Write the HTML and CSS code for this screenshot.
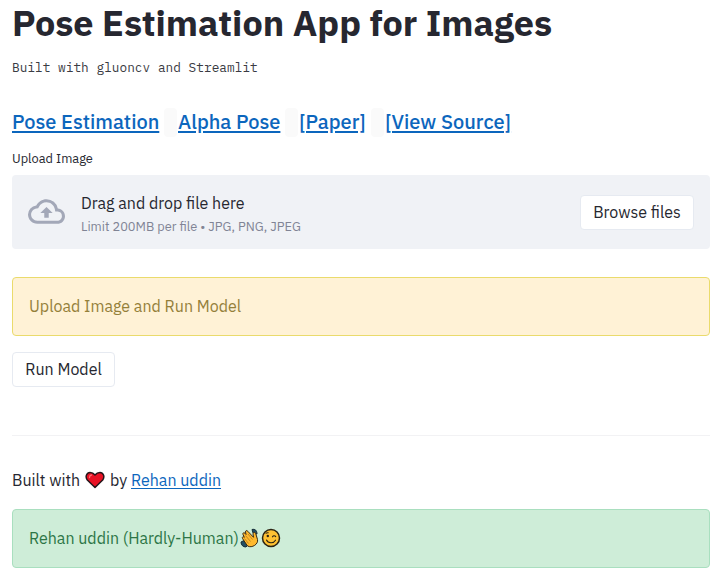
FILE: index.html
```
<!DOCTYPE html>
<html lang="en">
<head>
<meta charset="utf-8">
<title>Pose Estimation App for Images</title>
<link rel="stylesheet" href="styles.css">
</head>
<body>
<main class="page">
  <h1 class="title">Pose Estimation App for Images</h1>
  <p class="mono">Built with gluoncv and Streamlit</p>
  <nav class="links">
    <a class="l1" href="#">Pose Estimation</a><i class="chip"></i>
    <a class="l2" href="#">Alpha Pose</a><i class="chip"></i>
    <a class="l3" href="#">[Paper]</a><i class="chip"></i>
    <a class="l4" href="#">[View Source]</a>
  </nav>
  <label class="label">Upload Image</label>
  <section class="dropzone">
    <svg class="cloud" viewBox="0 0 24 24"><path d="M19.35 10.04A7.49 7.49 0 0 0 12 4C9.11 4 6.6 5.64 5.35 8.04A5.994 5.994 0 0 0 0 14c0 3.31 2.69 6 6 6h13c2.76 0 5-2.24 5-5 0-2.64-2.05-4.78-4.65-4.96zM19 18H6c-2.21 0-4-1.79-4-4 0-2.05 1.53-3.76 3.56-3.97l1.07-.11.5-.95A5.469 5.469 0 0 1 12 6c2.62 0 4.88 1.86 5.39 4.43l.3 1.5 1.53.11A2.98 2.98 0 0 1 22 15c0 1.65-1.35 3-3 3zM8 13h2.55v3h2.9v-3H16l-4-4z"/></svg>
    <div class="drop-text">
      <span class="drop-main">Drag and drop file here</span>
      <small class="drop-sub">Limit 200MB per file • JPG, PNG, JPEG</small>
    </div>
    <button class="btn browse">Browse files</button>
  </section>
  <div class="alert warning"><span>Upload Image and Run Model</span></div>
  <button class="btn run">Run Model</button>
  <hr class="rule">
  <p class="credit"><span class="built">Built with</span>
    <svg class="heart" viewBox="0 0 20 18"><path d="M10 16.500 2.300 9C-.2 5.500 1.800 1.500 5 1.500c2.200 0 3.800 1 5 2.500 1.200-1.500 2.800-2.500 5-2.500 3.200 0 5.200 4 2.700 7.500z" fill="#e81224" stroke="#24151a" stroke-width="1.500" stroke-linejoin="round"/><path d="M4.500 6.500c0-1.500.8-2.300 2-2.500" fill="none" stroke="#ff6b72" stroke-width="1.300" stroke-linecap="round"/></svg>
    <span class="by">by</span> <a class="author" href="#">Rehan uddin</a></p>
  <div class="alert success"><span class="name">Rehan uddin (Hardly-Human)</span>
    <svg class="emoji clap" viewBox="0 0 20 20"><path d="M12 1.500c3-.8 5 1 5 4.500l-4-1zM1 14l4-2 3 5-2 2c-3 0-5-2-5-5z" fill="#245064" stroke="#162d38"/><path d="M7.500 18 2.500 10.500c-.8-1.500.8-2.300 1.800-1.200L3 6.500c-.6-1.500 1-2.500 2-1.200L6 6.500 5.500 4c-.2-1.500 1.500-2 2.300-.7l5.700 6L13 6c0-2 2.300-2.200 2.800-.2l1.700 5.700c1.200 4.500-5.500 9-10 6.500z" fill="#ffb92e" stroke="#3b2b13" stroke-width="1" stroke-linejoin="round"/><path d="m5.500 7.500 5 6m-6-3 4 5M8 6l4.500 5.500" fill="none" stroke="#a8741d" stroke-width=".7"/></svg>
    <svg class="emoji wink" viewBox="0 0 20 20"><circle cx="10" cy="10" r="8.500" fill="#ffc233" stroke="#2b2414" stroke-width="1.500"/><circle cx="6.800" cy="8" r="1.200" fill="#2b2414"/><path d="M11.500 8.800c.8-1.400 2.400-1.400 3.200-.2M5.500 12c1.500 3.500 7 3.800 9 .2M5 5.200c.7-.5 1.400-.6 2.200-.4" fill="none" stroke="#2b2414" stroke-width="1.100" stroke-linecap="round"/></svg>
  </div>
</main>
</body>
</html>
```
FILE: styles.css
```
* { box-sizing: border-box; }
body { margin: 0; background: #fff; color: #262730; font: 400 16px/24px "IBM Plex Sans", Roboto, "Liberation Sans", sans-serif; }
.page { display: flex; flex-direction: column; align-items: flex-start; padding: 0 12px; height: 578px; overflow: hidden; }
h1, p { margin: 0; }
a { color: #0c66bd; text-decoration: underline; text-underline-offset: 2px; }
.title { height: 44px; font-size: 36px; line-height: 46px; font-weight: 700; white-space: nowrap; }
.mono { margin-top: 14px; font: 400 12.8px/20px "IBM Plex Mono", "Liberation Mono", monospace; color: #3a3b43; }
.links { display: flex; align-items: center; margin-top: 29px; height: 30px; font-size: 20px; line-height: 30px; font-weight: 500; white-space: nowrap; }
.links a { text-decoration-thickness: 2px; }
.l1 { width: 147px; }
.l2 { width: 102px; }
.l3 { width: 67px; }
.chip { width: 13px; height: 29px; margin: 0 1px 0 5px; background: #fafafa; border-radius: 4px; }
.label { margin-top: 12px; height: 26px; font-size: 12.8px; line-height: 20px; }
.dropzone { display: flex; align-items: center; width: 100%; height: 74px; padding: 0 16px; background: #f0f2f6; border-radius: 4px; }
.cloud { width: 37px; height: 37px; margin-top: -2px; fill: #a3a8b8; }
.drop-text { display: flex; flex-direction: column; margin: 4px auto 0 16px; }
.drop-main { line-height: 24px; }
.drop-sub { font-size: 12.8px; line-height: 23px; color: #808495; }
.btn { height: 35px; padding: 0 0 1px; font: inherit; color: inherit; background: #fff; border: 1px solid #e6eaf1; border-radius: 4px; white-space: nowrap; }
.browse { width: 114px; padding: 0; }
.alert { display: flex; align-items: center; width: 100%; height: 59px; padding: 0 16px 2px; border: 1px solid; border-radius: 4px; white-space: nowrap; }
.warning { margin-top: 28px; color: #94803a; background: #fff2d6; border-color: #eadb6c; }
.run { width: 103px; margin-top: 16px; }
.rule { width: 100%; height: 1px; margin: 48px 0 0; border: 0; background: #f2f2f4; }
.credit { display: flex; align-items: center; margin-top: 32px; height: 24px; white-space: nowrap; }
.built { width: 73px; }
.heart { width: 20px; height: 18px; }
.by { margin: 0 5px; width: 16px; }
.author { text-decoration-thickness: 1px; }
.success { margin-top: 17px; color: #2c7546; background: #ceedd8; border-color: #a9dfbf; }
.name { width: 211px; }
.emoji { width: 20px; height: 20px; }
.wink { margin-left: 1px; }
```
